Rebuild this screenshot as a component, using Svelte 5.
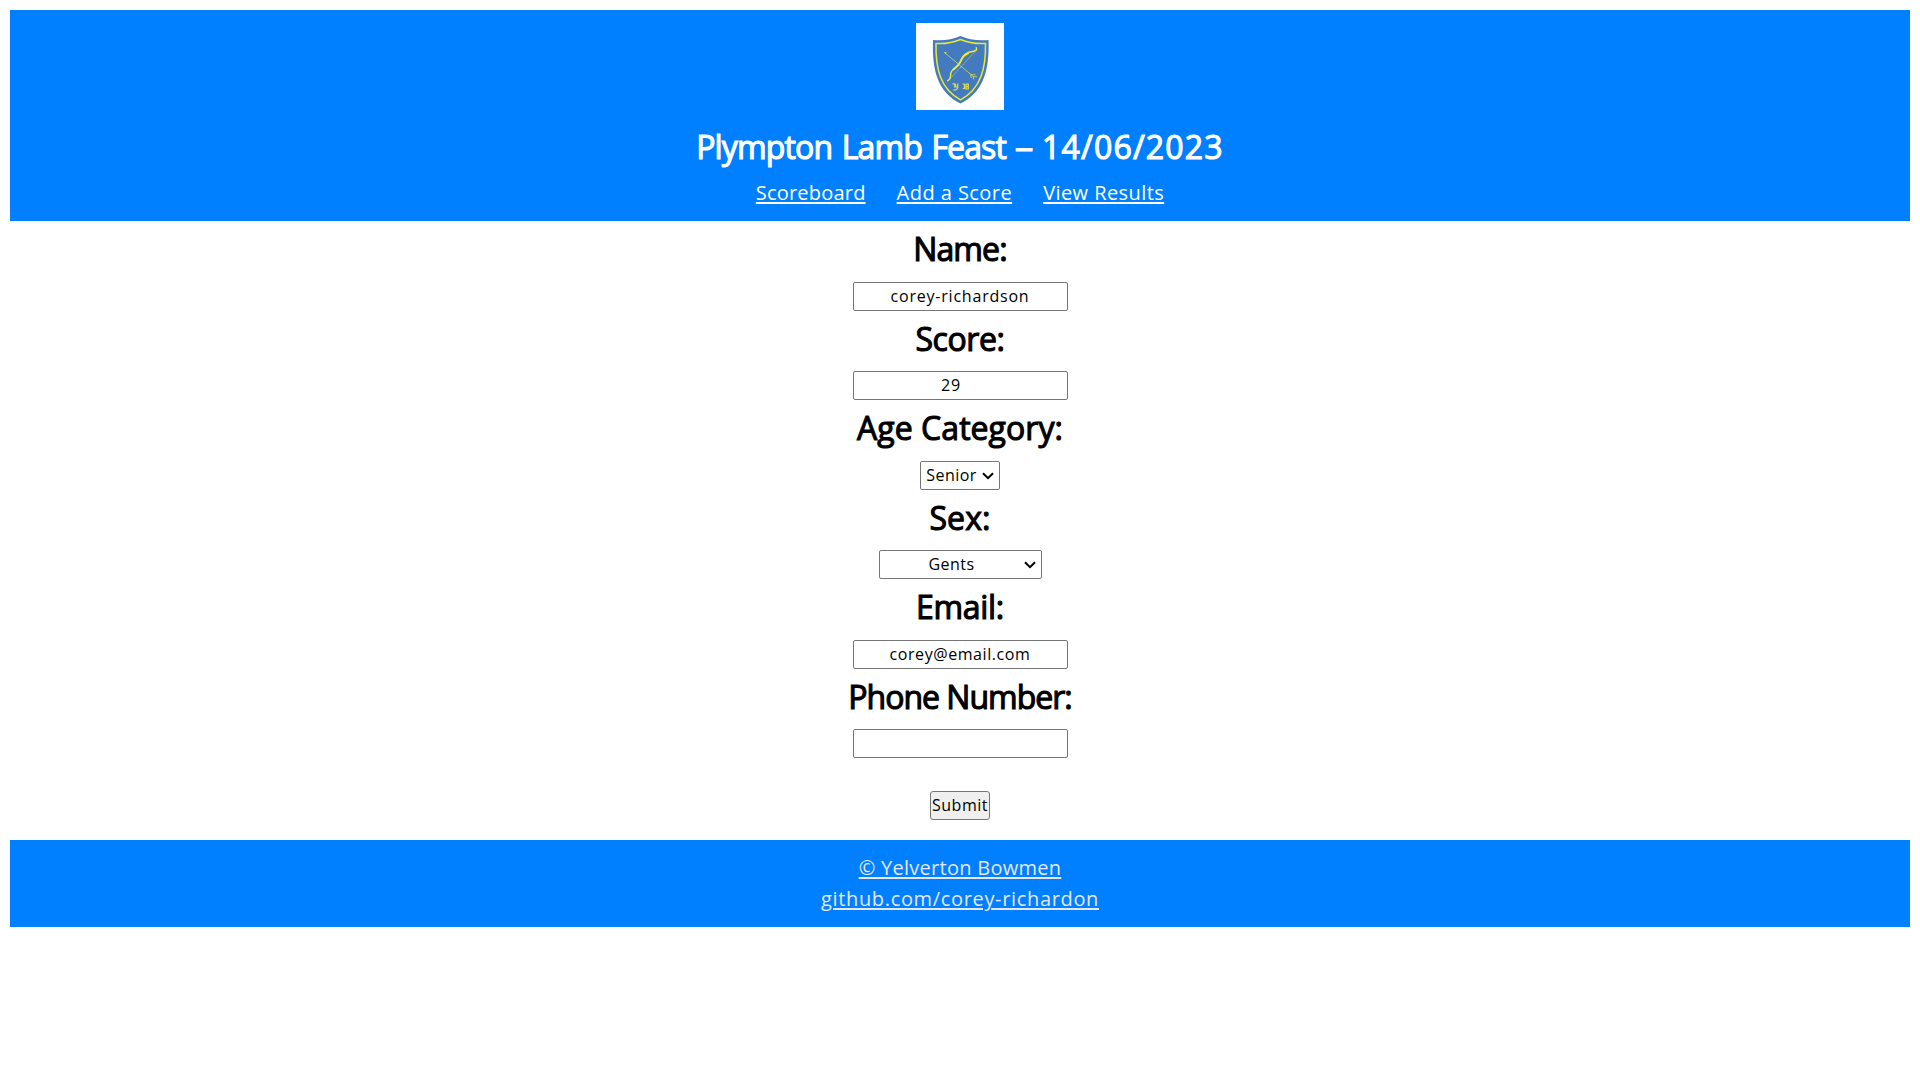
<script>
  const ageCategories = ['Senior', 'Junior'];
  const sexes = ['Gents', 'Ladies', 'Prefer not to say'];
</script>

{#snippet chevron()}
  <svg class="chevron" viewBox="0 0 12 8" aria-hidden="true">
    <path d="M1 1.200L6 6.200L11 1.200" fill="none" stroke="#000" stroke-width="2" />
  </svg>
{/snippet}

<header>
  <svg class="logo" viewBox="0 0 88 87" aria-label="Yelverton Bowmen">
    <rect width="88" height="87" fill="#fff" />
    <path d="M17 17C27 18 37 16.500 44.500 13C52 16.500 62 18 72.500 17C73.500 46 68 69 44.500 80.500C21 69 16 46 17 17Z" fill="#447abf" />
    <path d="M20 20.500C29 21 37.500 19.500 44.500 16.500C51.500 19.500 60 21 69.500 20.500C70 45 65 66 44.500 76.800C24 66 19.500 45 20 20.500Z" fill="none" stroke="#e9ea35" stroke-width="1.500" />
    <path d="M60.300 24.700Q61.500 27.500 57.500 28.200C50 29 46.500 32.500 45 37.500C43 44 35 45 34.700 51Q34.800 56 31.700 57.700" fill="none" stroke="#eeee30" stroke-width="1.400" stroke-linecap="round" />
    <path d="M52 30.500Q46.500 33 45 37.500Q43 42.500 37.500 46.500" fill="none" stroke="#eeee30" stroke-width="1.800" stroke-linecap="round" />
    <path d="M60.500 27L33 57" stroke="#c8d45c" stroke-width=".7" stroke-dasharray="1.500 .6" />
    <path d="M29 30L58 54M54.500 51.500l5 .3M54.500 51.500l.8 3.500M57 53.500l4 .3M57 53.500l.8 3" stroke="#d3da4c" stroke-width=".8" fill="none" />
    <path d="M28 29l3 .5-1.500 1.500Z" fill="#eeee30" />
    <path d="M36.500 60.800h2.200v3.200h3M41.700 60.500v4q0 2.500-4.500 2.500M39.500 61v3" stroke="#d9df48" stroke-width="1.200" fill="none" />
    <path d="M46.500 61h2v4.500h-1.700M50 61v5h2.300v-2.300h-2M50 61.200h2.300v2" stroke="#d9df48" stroke-width="1.200" fill="none" />
  </svg>
  <h1><span class="title">Plympton Lamb Feast</span> <span class="dash">-</span> <span class="date">14/06/2023</span></h1>
  <nav>
    <a class="n1" href="#scoreboard">Scoreboard</a>
    <a class="n2" href="#add">Add a Score</a>
    <a class="n3" href="#results">View Results</a>
  </nav>
</header>

<form>
  <label class="l-name" for="name">Name:</label>
  <input id="name" class="v-name" type="text" value="corey-richardson" />
  <label class="l-score" for="score">Score:</label>
  <input id="score" class="v-score" type="text" value="29" />
  <label class="l-age" for="age">Age Category:</label>
  <div class="field">
    <select id="age" class="age">
      {#each ageCategories as c}<option>{c}</option>{/each}
    </select>
    {@render chevron()}
  </div>
  <label class="l-sex" for="sex">Sex:</label>
  <div class="field">
    <select id="sex" class="sex">
      {#each sexes as s}<option>{s}</option>{/each}
    </select>
    {@render chevron()}
  </div>
  <label class="l-email" for="email">Email:</label>
  <input id="email" class="v-email" type="text" value="corey@email.com" />
  <label class="l-phone" for="phone">Phone Number:</label>
  <input id="phone" type="text" />
  <button type="button">Submit</button>
</form>

<footer>
  <a class="club" href="#club">© Yelverton Bowmen</a>
  <a class="repo" href="#repo">github.com/corey-richardon</a>
</footer>

<style>
  :global(body) {
    margin: 0;
    background: #fff;
  }
  :global(#app) {
    padding: 10px;
    font-family: "Open Sans", "Noto Sans", sans-serif;
    font-size: 20px;
    color: #000;
  }
  header, form, footer {
    display: flex;
    flex-direction: column;
    align-items: center;
  }
  header {
    height: 211px;
    box-sizing: border-box;
    padding-top: 13px;
    background: #0080ff;
    color: #fff;
  }
  .logo {
    width: 88px;
    height: 87px;
    flex: none;
  }
  h1, label {
    font-size: 32px;
    font-weight: 400;
    -webkit-text-stroke: 1.1px currentColor;
    white-space: nowrap;
  }
  h1 {
    margin: 15px 0 0;
    height: 44px;
    line-height: 44px;
  }
  .title {
    letter-spacing: -0.85px;
    word-spacing: 2px;
  }
  .date { letter-spacing: 1.2px; }
  .dash {
    display: inline-block;
    transform: scaleX(1.9);
    margin: 0 4px 0 5px;
  }
  nav {
    display: flex;
    gap: 31px;
    line-height: 28px;
    margin-top: 10px;
  }
  .n1 { letter-spacing: 0.2px; }
  .n2 { letter-spacing: 0.45px; }
  .n3 { letter-spacing: 0.42px; }
  a {
    color: inherit;
    text-decoration: underline;
    text-decoration-thickness: 2px;
    text-underline-offset: 2px;
    white-space: nowrap;
  }
  label {
    height: 60.9px;
    line-height: 56px;
  }
  input, select, button {
    height: 29px;
    box-sizing: border-box;
    font-family: inherit;
    font-size: 16px;
    text-align: center;
    color: #000;
    border: 1px solid #767676;
    border-radius: 2px;
    flex: none;
  }
  input, .field {
    margin: 0 0 -0.4px;
  }
  input {
    width: 215px;
    padding: 0 2px 1.4px;
    background: #fff;
  }
  .field {
    display: flex;
    position: relative;
    height: 29px;
    flex: none;
  }
  select {
    margin: 0;
    appearance: none;
    background: #fff;
    letter-spacing: 0.45px;
    text-align-last: center;
    padding: 0 17px 1.4px 0;
  }
  .chevron {
    position: absolute;
    right: 6px;
    top: 11px;
    width: 12px;
    height: 8px;
    pointer-events: none;
  }
  .age { width: 80px; }
  .sex { width: 163px; }
  .l-name { letter-spacing: -0.9px; }
  .l-score { letter-spacing: -0.4px; }
  .l-age { letter-spacing: 0.05px; }
  .l-sex { letter-spacing: 0.1px; }
  .l-email { letter-spacing: -0.3px; }
  .l-phone { letter-spacing: -1px; }
  .v-name { letter-spacing: 0.79px; }
  .v-score { letter-spacing: 0.8px; padding-right: 20px; }
  .v-email { letter-spacing: 0.58px; }
  button {
    width: 60px;
    padding: 0 0 2px;
    margin: 33px 0 20px;
    background: #efefef;
    border-radius: 3px;
    letter-spacing: 0.5px;
  }
  footer {
    height: 87px;
    box-sizing: border-box;
    padding-top: 12px;
    background: #0080ff;
    color: #e6e6fa;
    line-height: 31px;
  }
  .club { letter-spacing: 0.27px; }
  .repo { letter-spacing: 0.66px; }
</style>
